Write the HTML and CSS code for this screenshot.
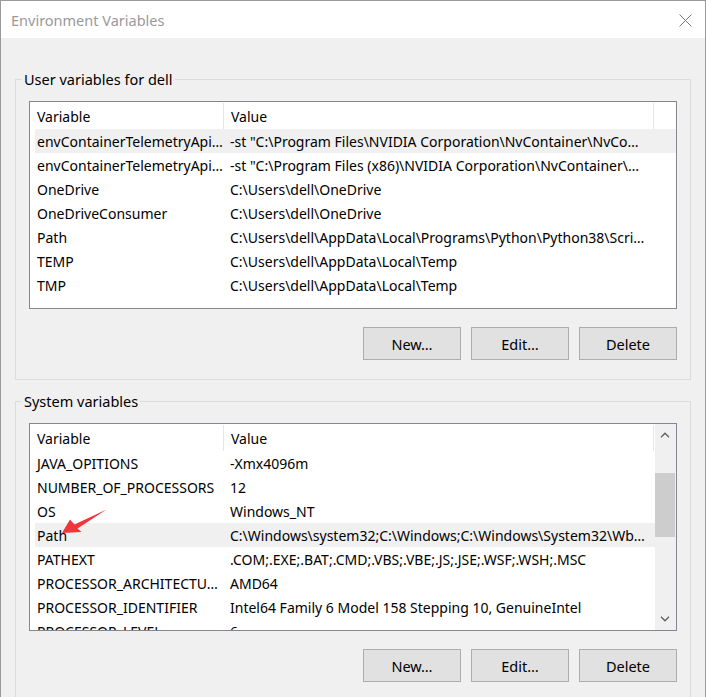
FILE: index.html
```html
<!DOCTYPE html>
<html lang="en">
<head>
<meta charset="utf-8">
<title>Environment Variables</title>
<link rel="stylesheet" href="styles.css">
</head>
<body>
<div class="window">
  <div class="titlebar">
    <span class="title">Environment Variables</span>
    <svg class="close" width="13" height="13" viewBox="0 0 13 13"><path d="M0.5 0.5L12.5 12.5M12.5 0.5L0.5 12.5" stroke="#777" stroke-width="1" fill="none"/></svg>
  </div>
  <div class="content">
    <fieldset class="group">
      <legend>User variables for dell</legend>
      <div class="group-body">
        <div class="listbox">
          <div class="list">
            <div class="header"><div class="hcell">Variable</div><div class="hcell">Value</div></div>
            <div class="row selected"><div class="cell">envContainerTelemetryApi…</div><div class="cell val">-st "C:\Program Files\NVIDIA Corporation\NvContainer\NvCo…</div></div>
            <div class="row"><div class="cell">envContainerTelemetryApi…</div><div class="cell val">-st "C:\Program Files (x86)\NVIDIA Corporation\NvContainer\…</div></div>
            <div class="row"><div class="cell">OneDrive</div><div class="cell val">C:\Users\dell\OneDrive</div></div>
            <div class="row"><div class="cell">OneDriveConsumer</div><div class="cell val">C:\Users\dell\OneDrive</div></div>
            <div class="row"><div class="cell">Path</div><div class="cell val">C:\Users\dell\AppData\Local\Programs\Python\Python38\Scri…</div></div>
            <div class="row"><div class="cell">TEMP</div><div class="cell val">C:\Users\dell\AppData\Local\Temp</div></div>
            <div class="row"><div class="cell">TMP</div><div class="cell val">C:\Users\dell\AppData\Local\Temp</div></div>
          </div>
        </div>
        <div class="buttons">
          <button class="btn">New…</button>
          <button class="btn">Edit…</button>
          <button class="btn">Delete</button>
        </div>
      </div>
    </fieldset>

    <fieldset class="group second">
      <legend>System variables</legend>
      <div class="group-body">
        <div class="listbox">
          <div class="list">
            <div class="header"><div class="hcell">Variable</div><div class="hcell">Value</div></div>
            <div class="row"><div class="cell">JAVA_OPITIONS</div><div class="cell val">-Xmx4096m</div></div>
            <div class="row"><div class="cell">NUMBER_OF_PROCESSORS</div><div class="cell val">12</div></div>
            <div class="row"><div class="cell">OS</div><div class="cell val">Windows_NT</div></div>
            <div class="row selected"><div class="cell">Path</div><div class="cell val">C:\Windows\system32;C:\Windows;C:\Windows\System32\Wb…</div></div>
            <div class="row"><div class="cell">PATHEXT</div><div class="cell val">.COM;.EXE;.BAT;.CMD;.VBS;.VBE;.JS;.JSE;.WSF;.WSH;.MSC</div></div>
            <div class="row"><div class="cell">PROCESSOR_ARCHITECTU…</div><div class="cell val">AMD64</div></div>
            <div class="row"><div class="cell">PROCESSOR_IDENTIFIER</div><div class="cell val">Intel64 Family 6 Model 158 Stepping 10, GenuineIntel</div></div>
            <div class="row"><div class="cell">PROCESSOR_LEVEL</div><div class="cell val">6</div></div>
          </div>
          <div class="scrollbar">
            <div class="sb-btn"><svg width="10" height="6" viewBox="0 0 10 6"><path d="M1 5.2L5 1.2L9 5.2" stroke="#606060" stroke-width="1.3" fill="none"/></svg></div>
            <div class="sb-track"><div class="sb-thumb"></div></div>
            <div class="sb-btn"><svg width="10" height="6" viewBox="0 0 10 6"><path d="M1 0.8L5 4.8L9 0.8" stroke="#606060" stroke-width="1.3" fill="none"/></svg></div>
          </div>
          <svg class="annotation" width="50" height="30" viewBox="0 0 50 30"><polygon points="2,25 10,11.5 14.5,16.5 46.5,1.5 17.5,20.5 21.5,24" fill="#f2353a"/></svg>
        </div>
        <div class="buttons">
          <button class="btn">New…</button>
          <button class="btn">Edit…</button>
          <button class="btn">Delete</button>
        </div>
      </div>
    </fieldset>
  </div>
</div>
</body>
</html>
```

FILE: styles.css
```css
* { box-sizing: border-box; }

html, body {
  margin: 0;
  padding: 0;
  background: #f0f0f0;
}

body {
  font-family: "Noto Sans", "Open Sans", sans-serif;
  font-size: 14px;
  color: #000;
}

.window {
  width: 706px;
  height: 697px;
  border: 1px solid #9a9a9a;
  border-bottom: none;
  overflow: hidden;
  background: #f0f0f0;
  display: flex;
  flex-direction: column;
}

.titlebar {
  height: 37px;
  flex: 0 0 37px;
  background: #fff;
  display: flex;
  align-items: center;
  justify-content: space-between;
  padding: 0 13px 0 10px;
}

.title {
  color: #999;
  font-size: 14.5px;
}

.close {
  display: block;
  margin-top: 1px;
}

.content {
  padding: 0 14px;
}

.group {
  margin: 31px 0 0;
  padding: 0;
  border: 1px solid #dcdcdc;
  min-width: 0;
}

.group.second {
  margin-top: 11px;
}

.group legend {
  margin-left: 6px;
  padding: 0 2px;
  line-height: 20px;
  font-size: 14.5px;
}

.group-body {
  padding: 12px 13px 19px;
}

.listbox {
  position: relative;
  height: 208px;
  border: 1px solid #828790;
  background: #fff;
  display: flex;
  overflow: hidden;
}

.list {
  flex: 1;
  overflow: hidden;
}

.header {
  display: grid;
  grid-template-columns: 194px 430px;
  height: 27px;
}

.hcell {
  padding: 1px 0 0 7px;
  display: flex;
  align-items: center;
  border-right: 1px solid #e5e5e5;
  margin-top: 1px;
}

.row {
  display: grid;
  grid-template-columns: 189px 430px;
  height: 24px;
  margin-left: 5px;
  align-items: center;
}

.row.selected {
  background: #f0f0f0;
}

.cell {
  white-space: nowrap;
  overflow: hidden;
  padding-left: 2px;
}

.cell.val {
  padding-left: 6px;
}

.scrollbar {
  width: 21px;
  flex: 0 0 21px;
  background: #f0f0f0;
  display: flex;
  flex-direction: column;
}

.sb-btn {
  height: 22px;
  flex: 0 0 22px;
  display: flex;
  align-items: center;
  justify-content: center;
  padding-right: 1px;
}

.sb-track {
  flex: 1;
  padding-top: 27px;
}

.sb-thumb {
  height: 64px;
  width: 20px;
  background: #cdcdcd;
}

.annotation {
  position: absolute;
  left: 30px;
  top: 84px;
}

.buttons {
  display: flex;
  justify-content: flex-end;
  gap: 10px;
  margin-top: 18px;
}

.btn {
  width: 98px;
  height: 33px;
  border: 1px solid #adadad;
  background: #e1e1e1;
  font-family: inherit;
  font-size: 14.5px;
  color: #000;
  padding: 0;
  margin: 0;
}
```
